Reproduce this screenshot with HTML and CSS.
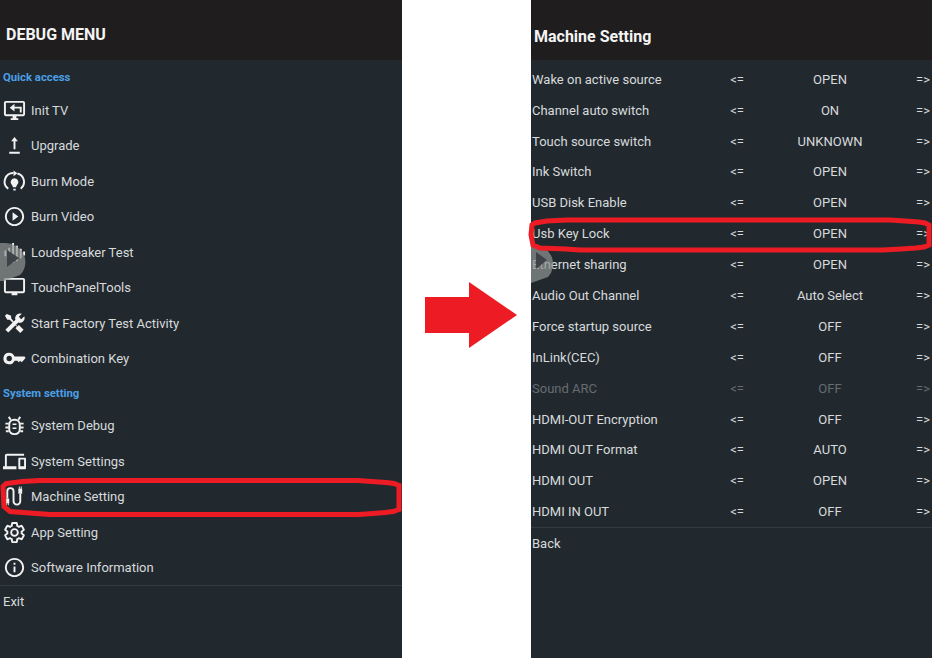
FILE: index.html
```html
<!DOCTYPE html>
<html lang="en">
<head>
<meta charset="utf-8">
<title>Debug Menu</title>
<link rel="stylesheet" href="styles.css">
</head>
<body>
<div class="stage">
  <section class="panel menu">
    <header class="bar"><h1 class="bar-title">DEBUG MENU</h1></header>
    <h2 class="group first">Quick access</h2>
    <ul class="items">
      <li class="item"><svg class="ico" viewBox="0 0 24 24"><path d="M21 2H3c-1.100 0-2 .9-2 2v12c0 1.100.9 2 2 2h7v2H8v2h8v-2h-2v-2h7c1.100 0 2-.9 2-2V4c0-1.100-.9-2-2-2zm0 14H3V4h18v12z"/><path d="M12 5 7 9l5 4v-3h5.500v4h2V8H12z"/></svg>Init TV</li>
      <li class="item"><svg class="ico" viewBox="0 0 24 24"><path d="M12 3 8.500 7.500H11V16h2V7.500h2.500zM6.500 18.500h11v2h-11z"/></svg>Upgrade</li>
      <li class="item"><svg class="ico" viewBox="0 0 24 24"><path class="line" d="M5.500 19.500A9 9 0 0 1 11 3.200M15 3.700a9 9 0 0 1 3.500 15.800"/><path d="M11 .5v6l4-3zM12 8.500a4.200 4.200 0 0 0-2.500 7.500l1 2h3l1-2A4.200 4.200 0 0 0 12 8.500zM10.800 19.500h2.400v2h-2.400z"/></svg>Burn Mode</li>
      <li class="item"><svg class="ico" viewBox="0 0 24 24"><path d="M10 16.500l6-4.500-6-4.500v9zM12 2C6.480 2 2 6.480 2 12s4.480 10 10 10 10-4.480 10-10S17.520 2 12 2zm0 18c-4.410 0-8-3.590-8-8s3.590-8 8-8 8 3.590 8 8-3.590 8-8 8z"/></svg>Burn Video</li>
      <li class="item"><svg class="ico" viewBox="0 0 24 24"><path d="M1.500 10h2v6h-2zM5.500 7h2v13h-2zM9.500 2h2v21h-2zM13.500 5h2v16h-2zM17.500 8h2v10h-2zM21 11h2v4h-2z"/></svg>Loudspeaker Test</li>
      <li class="item"><svg class="ico" viewBox="0 0 24 24"><path d="M21 2H3c-1.100 0-2 .9-2 2v12c0 1.100.9 2 2 2h6v2h6v-2h6c1.100 0 2-.9 2-2V4c0-1.100-.9-2-2-2zm0 14H3V4h18v12z"/></svg>TouchPanelTools</li>
      <li class="item"><svg class="ico" viewBox="0 0 24 24"><path d="M4 2 2 4l2.500 4H7l7.500 7.500-1.500 1.500 5 5 3.500-3.500-5-5-1.500 1.500L8.500 6.500V4zM17.500 1.500a5 5 0 0 0-4.500 6.700L2.500 18.500l3 3L16 11a5 5 0 0 0 6.300-6.500L19 7.500 16.500 5l3.200-3.200a5 5 0 0 0-2.200-.3z"/></svg>Start Factory Test Activity</li>
      <li class="item"><svg class="ico" viewBox="0 0 24 24"><path d="M6.500 6a6 6 0 1 0 5.500 8.300h3l1.500 1.500 1.500-1.500 1.500 1.500 1.500-1.500 2.500-2.800-1-1.500H12A6 6 0 0 0 6.500 6zm0 3.200a2.800 2.800 0 1 1 0 5.600 2.800 2.800 0 0 1 0-5.600z"/></svg>Combination Key</li>
    </ul>
    <h2 class="group">System setting</h2>
    <ul class="items items-second">
      <li class="item"><svg class="ico" viewBox="0 0 24 24"><rect class="line" x="6.500" y="6" width="11" height="15" rx="5"/><path class="line" d="M8 6 6 3M16 6l2-3M6 10H2.500M6 14H2.500M6 18H3M18 10h3.500M18 14h3.500M18 18h3"/><path d="M10 10h4v1.600h-4zM10 14h4v1.600h-4z"/></svg>System Debug</li>
      <li class="item"><svg class="ico ico-wide" viewBox="0 0 24 24"><path d="M4 6h18V4H4c-1.100 0-2 .9-2 2v11H0v3h14v-3H4V6zm19 2h-6c-.55 0-1 .45-1 1v10c0 .55.45 1 1 1h6c.55 0 1-.45 1-1V9c0-.55-.45-1-1-1zm-1 9h-4v-7h4v7z"/></svg>System Settings</li>
      <li class="item"><svg class="ico" viewBox="0 0 24 24"><path class="line" d="M4.500 14V6.500a3.250 3.250 0 0 1 6.500 0V17a3.500 3.500 0 0 0 7 0V9"/><path d="M2.500 14h4v5h-4zM3 19h1v2H3zM5 19h1v2H5zM16 4h4v5h-4zM16.500 1.500h1V4h-1zM18.500 1.500h1V4h-1z"/></svg>Machine Setting</li>
      <li class="item"><svg class="ico" viewBox="0 0 24 24"><path class="line" d="M19.430 12.980c.04-.32.07-.64.07-.98s-.03-.66-.07-.98l2.110-1.650c.19-.15.24-.42.12-.64l-2-3.460c-.12-.22-.39-.3-.61-.22l-2.490 1c-.52-.4-1.080-.73-1.690-.98l-.38-2.650C14.460 2.180 14.250 2 14 2h-4c-.25 0-.46.18-.49.42l-.38 2.650c-.61.25-1.170.59-1.690.98l-2.490-1c-.23-.09-.49 0-.61.22l-2 3.460c-.13.22-.07.49.12.64l2.110 1.650c-.04.32-.07.65-.07.98s.03.66.07.98l-2.110 1.650c-.19.15-.24.42-.12.64l2 3.460c.12.22.39.3.61.22l2.490-1c.52.4 1.080.73 1.690.98l.38 2.650c.03.24.24.42.49.42h4c.25 0 .46-.18.49-.42l.38-2.650c.61-.25 1.170-.59 1.690-.98l2.490 1c.23.09.49 0 .61-.22l2-3.460c.12-.22.07-.49-.12-.64l-2.110-1.650z"/><circle class="line" cx="12" cy="12" r="3.500"/></svg>App Setting</li>
      <li class="item"><svg class="ico" viewBox="0 0 24 24"><path d="M11 17h2v-6h-2v6zm1-15C6.480 2 2 6.480 2 12s4.480 10 10 10 10-4.480 10-10S17.520 2 12 2zm0 18c-4.410 0-8-3.590-8-8s3.590-8 8-8 8 3.590 8 8-3.590 8-8 8zM11 9h2V7h-2v2z"/></svg>Software Information</li>
    </ul>
    <div class="foot foot-menu">Exit</div>
  </section>

  <section class="panel settings">
    <header class="bar"><h1 class="bar-title bar-title-settings">Machine Setting</h1></header>
    <div class="rows">
      <div class="row"><span>Wake on active source</span><span class="mid">&lt;=</span><span class="mid">OPEN</span><span class="mid">=&gt;</span></div>
      <div class="row"><span>Channel auto switch</span><span class="mid">&lt;=</span><span class="mid">ON</span><span class="mid">=&gt;</span></div>
      <div class="row"><span>Touch source switch</span><span class="mid">&lt;=</span><span class="mid">UNKNOWN</span><span class="mid">=&gt;</span></div>
      <div class="row"><span>Ink Switch</span><span class="mid">&lt;=</span><span class="mid">OPEN</span><span class="mid">=&gt;</span></div>
      <div class="row"><span>USB Disk Enable</span><span class="mid">&lt;=</span><span class="mid">OPEN</span><span class="mid">=&gt;</span></div>
      <div class="row"><span>Usb Key Lock</span><span class="mid">&lt;=</span><span class="mid">OPEN</span><span class="mid">=&gt;</span></div>
      <div class="row"><span>Ethernet sharing</span><span class="mid">&lt;=</span><span class="mid">OPEN</span><span class="mid">=&gt;</span></div>
      <div class="row"><span>Audio Out Channel</span><span class="mid">&lt;=</span><span class="mid">Auto Select</span><span class="mid">=&gt;</span></div>
      <div class="row"><span>Force startup source</span><span class="mid">&lt;=</span><span class="mid">OFF</span><span class="mid">=&gt;</span></div>
      <div class="row"><span>InLink(CEC)</span><span class="mid">&lt;=</span><span class="mid">OFF</span><span class="mid">=&gt;</span></div>
      <div class="row row-off"><span>Sound ARC</span><span class="mid">&lt;=</span><span class="mid">OFF</span><span class="mid">=&gt;</span></div>
      <div class="row"><span>HDMI-OUT Encryption</span><span class="mid">&lt;=</span><span class="mid">OFF</span><span class="mid">=&gt;</span></div>
      <div class="row"><span>HDMI OUT Format</span><span class="mid">&lt;=</span><span class="mid">AUTO</span><span class="mid">=&gt;</span></div>
      <div class="row"><span>HDMI OUT</span><span class="mid">&lt;=</span><span class="mid">OPEN</span><span class="mid">=&gt;</span></div>
      <div class="row"><span>HDMI IN OUT</span><span class="mid">&lt;=</span><span class="mid">OFF</span><span class="mid">=&gt;</span></div>
    </div>
    <div class="foot foot-settings">Back</div>
  </section>

  <svg class="marks" viewBox="0 0 932 658" aria-hidden="true">
    <path class="handle" d="M0 243h5a20 19 0 0 1 15 32L4 281H0z"/>
    <path class="handle-tri" d="M7 250l12 8-12 9z"/>
    <path class="handle" d="M531 245h3a19 19 0 0 1 14 32l-17 6z"/>
    <path class="handle-tri" d="M536 252l11 8-11 9z"/>
    <path class="ring" d="M40 480.500H358l14 1 14 1 8 1 5 2v24l-6 2-8 1-12 1-14 1H50l-40-3-6-5-1-20 3-3 16-2z"/>
    <path class="ring" d="M620 220H890l15 1 14 1 6 1 4 2v20l-5 2-8 1-15 1-18 1H580l-14-1-26-1-7-3-2-10 1-10 3-2 12-2 20-1z"/>
    <path class="arrow" d="M425 297h44v-15l48 33-48 33v-15h-44z"/>
  </svg>
</div>
</body>
</html>
```
FILE: styles.css
```css
* { box-sizing: border-box; }
html, body { margin: 0; padding: 0; background: #fff; }
.stage {
  position: relative;
  width: 932px;
  height: 658px;
  overflow: hidden;
  display: flex;
  justify-content: space-between;
  font-family: Roboto, "Liberation Sans", sans-serif;
  font-size: 13px;
  color: #d8dadb;
}
.panel { height: 658px; background: #21292f; overflow: hidden; }
.menu { width: 402px; }
.settings { width: 401px; }
.bar { height: 60px; background: #1f1d1d; display: flex; align-items: center; }
.bar-title { margin: 0; padding: 0 0 0 6px; font-size: 16px; font-weight: 700; color: #f4f4f4; position: relative; top: 4px; }
.bar-title-settings { padding-left: 3px; top: 6px; }
.group { margin: 0; padding-left: 3px; height: 17px; line-height: 17px; font-size: 11.300px; font-weight: 700; color: #4b9fe6; }
.group.first { margin-top: 9px; }
.items { list-style: none; margin: 6.700px 0 0; padding: 0; }
.items + .group { margin-top: 8.300px; }
.items-second { margin-top: 6px; }
.item { height: 35.500px; display: flex; align-items: center; gap: 5px; padding-left: 3px; white-space: nowrap; }
.ico { width: 23px; height: 23px; flex: none; fill: #f2f2f2; }
.line { fill: none; stroke: #f2f2f2; stroke-width: 2; }
.ico-wide { width: 25px; margin-left: -1px; margin-right: -1px; }
.foot { border-top: 1px solid #343c41; padding-left: 3px; }
.foot-menu { height: 34px; line-height: 32px; }
.foot-settings { padding-left: 1px; height: 32px; line-height: 31px; }
.rows { padding-top: 3.800px; }
.row { height: 30.900px; display: grid; grid-template-columns: 190px 30px 156px 30px; align-items: center; padding-left: 1px; white-space: nowrap; }
.mid { text-align: center; }
.row-off { color: #666c70; }
.marks { position: absolute; left: 0; top: 0; width: 932px; height: 658px; }
.handle { fill: #8e928f; opacity: .72; }
.handle-tri { fill: #3f4248; }
.ring { fill: none; stroke: #ed1c24; stroke-width: 5; }
.arrow { fill: #ed1c24; }
```
